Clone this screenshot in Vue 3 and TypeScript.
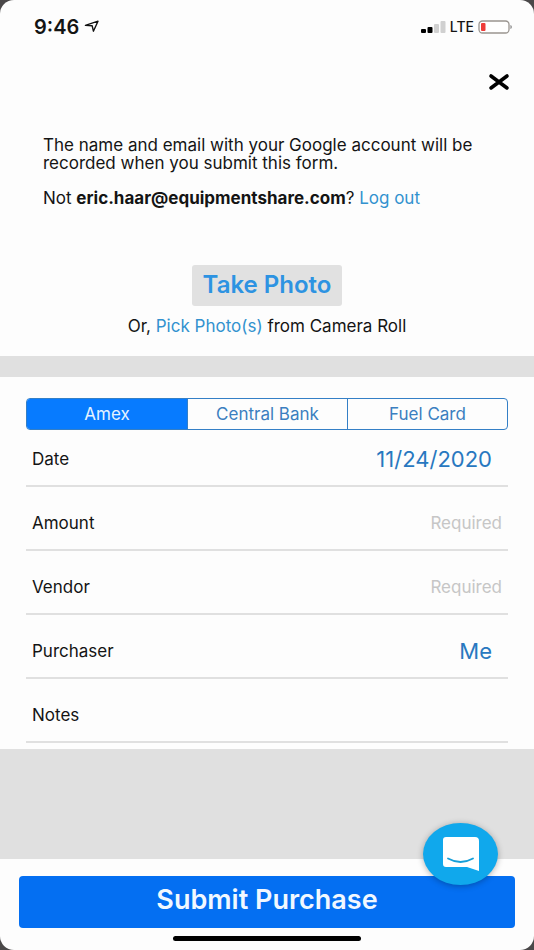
<script setup lang="ts">
import { ref } from 'vue'

const cards = ['Amex', 'Central Bank', 'Fuel Card']
const card = ref('Amex')
const date = ref('11/24/2020')
const amount = ref('')
const vendor = ref('')
const purchaser = ref('Me')
const notes = ref('')
</script>

<template>
  <div class="device">
    <div class="screen">
      <header class="status">
        <div class="clock">
          <span>9:46</span>
          <svg width="16" height="13" viewBox="0 0 16 13" fill="none" stroke="#111" stroke-width="1.4" stroke-linejoin="round">
            <path d="M1.4 5.4 14 1.2 9.4 11.2 8.2 5.8Z" />
          </svg>
        </div>
        <div class="signals">
          <svg width="25" height="14" viewBox="0 0 25 14">
            <rect x="0" y="9" width="5" height="4" rx="1" fill="#000" />
            <rect x="6.500" y="7" width="5" height="6" rx="1" fill="#000" />
            <rect x="13" y="4" width="5" height="9" rx="1" fill="#d0d0d0" />
            <rect x="19.500" y="1" width="5" height="12" rx="1" fill="#d0d0d0" />
          </svg>
          <span>LTE</span>
          <svg width="35" height="14" viewBox="0 0 35 14">
            <rect x="1" y="1" width="30" height="12" rx="3.500" fill="#fff" stroke="#9a9590" stroke-width="1.300" />
            <rect x="3" y="3" width="4.500" height="8" rx="1" fill="#ee3b38" />
            <path d="M32.500 5c1.600.3 1.600 3.700 0 4z" fill="#777" />
          </svg>
        </div>
      </header>

      <div class="toolbar">
        <button class="close" type="button" aria-label="Close">
          <svg width="22" height="18" viewBox="0 0 22 18" stroke="#000" stroke-width="3.600" stroke-linecap="round">
            <path d="M3 3 19 15M19 3 3 15" />
          </svg>
        </button>
      </div>

      <section class="account">
        <p>The name and email with your Google account will be recorded when you submit this form.</p>
        <p>Not <strong>eric.haar@equipmentshare.com</strong>? <a href="#">Log out</a></p>
      </section>

      <section class="photo">
        <button class="take" type="button">Take Photo</button>
        <p>Or, <a href="#">Pick Photo(s)</a> from Camera Roll</p>
      </section>

      <div class="band"></div>

      <form id="purchase" class="form" @submit.prevent>
        <div class="segments" role="radiogroup" aria-label="Card">
          <label v-for="name in cards" :key="name" class="segment" :class="{ active: card === name }">
            <input v-model="card" type="radio" name="card" :value="name" />
            <span>{{ name }}</span>
          </label>
        </div>
        <div class="rows">
          <div class="row">
            <label for="date">Date</label>
            <input id="date" v-model="date" class="value" type="text" />
          </div>
          <div class="row">
            <label for="amount">Amount</label>
            <input id="amount" v-model="amount" type="text" inputmode="decimal" placeholder="Required" />
          </div>
          <div class="row">
            <label for="vendor">Vendor</label>
            <input id="vendor" v-model="vendor" type="text" placeholder="Required" />
          </div>
          <div class="row">
            <label for="purchaser">Purchaser</label>
            <select id="purchaser" v-model="purchaser" class="value">
              <option>Me</option>
            </select>
          </div>
          <div class="row">
            <label for="notes">Notes</label>
            <input id="notes" v-model="notes" type="text" />
          </div>
        </div>
      </form>

      <div class="filler"></div>

      <footer class="footer">
        <button class="submit" type="submit" form="purchase">Submit Purchase</button>
        <div class="home"></div>
        <button class="chat" type="button" aria-label="Open chat">
          <svg width="38" height="36" viewBox="0 0 38 36">
            <path d="M4 1H33Q37 1 37 5V35L25 31H4Q1 31 1 28V4Q1 1 4 1Z" fill="#fff" />
            <path d="M6 22.500Q18.500 29.500 31 22.500" fill="none" stroke="#169fd8" stroke-width="1.800" stroke-linecap="round" />
          </svg>
        </button>
      </footer>
    </div>
  </div>
</template>

<style>
body {
  margin: 0;
  background: #4a4849;
}
</style>

<style scoped>
* {
  box-sizing: border-box;
}
.device {
  background: #4a4849;
  font-family: Inter, "Liberation Sans", sans-serif;
  font-size: 17px;
  line-height: 18px;
  color: #141414;
}
.screen {
  display: flex;
  flex-direction: column;
  min-height: 100vh;
  background: #fdfdfd;
  border-radius: 14px;
  overflow: hidden;
}
button,
input,
select {
  font: inherit;
  border: 0;
  margin: 0;
  padding: 0;
  background: none;
}
p {
  margin: 0;
}
a {
  color: #3292cf;
  text-decoration: none;
}
.status {
  display: flex;
  justify-content: space-between;
  align-items: center;
  height: 53px;
  padding: 0 21px 0 34px;
}
.clock,
.signals {
  display: flex;
  align-items: center;
}
.clock {
  gap: 5px;
  font-size: 20px;
  font-weight: 600;
}
.signals {
  gap: 4px;
  font-size: 14px;
  font-weight: 500;
}
.toolbar {
  display: flex;
  justify-content: flex-end;
  padding: 20px 24px 0;
}
.close {
  display: flex;
  height: 18px;
}
.account {
  display: flex;
  flex-direction: column;
  gap: 17px;
  padding: 45px 43px 0;
}
.photo {
  display: flex;
  flex-direction: column;
  align-items: center;
  gap: 11px;
  padding: 58px 20px 21px;
}
.take {
  height: 41px;
  padding: 0 11px 2px;
  border-radius: 3px;
  background: #e1e1e1;
  color: #2d93e2;
  font-size: 24px;
  font-weight: 600;
}
.band {
  height: 21px;
  background: #e0e0e0;
}
.form {
  padding: 21px 26px 6px;
}
.segments {
  display: grid;
  grid-template-columns: repeat(3, 1fr);
  height: 32px;
  border: 1px solid #347fc6;
  border-radius: 4px;
  overflow: hidden;
}
.segment {
  display: flex;
  align-items: center;
  justify-content: center;
  color: #3b7fc0;
}
.segment + .segment {
  border-left: 1px solid #347fc6;
}
.segment.active {
  background: #077bff;
  color: #e4f3ff;
}
.segment input {
  appearance: none;
  width: 0;
  height: 0;
}
.rows {
  margin-top: -7px;
}
.row {
  display: flex;
  align-items: center;
  justify-content: space-between;
  height: 64px;
  padding: 10px 6px 0;
  border-bottom: 2px solid #e0e0e0;
}
.row input,
.row select {
  flex: 1;
  min-width: 0;
  text-align: right;
  outline: 0;
}
.row input::placeholder {
  color: #c6c6c6;
  opacity: 1;
}
.row .value {
  appearance: none;
  padding-right: 10px;
  color: #2878c0;
  font-size: 22px;
  line-height: 24px;
  text-align-last: right;
}
.filler {
  flex: 1;
  min-height: 40px;
  background: #e0e0e0;
}
.footer {
  position: relative;
  display: flex;
  flex-direction: column;
  align-items: center;
  gap: 8px;
  padding: 17px 19px 9px;
}
.submit {
  width: 100%;
  height: 52px;
  padding-bottom: 4px;
  border-radius: 4px;
  background: #046ff2;
  color: #f1f8ff;
  font-size: 27px;
  font-weight: 600;
}
.home {
  width: 38%;
  height: 5px;
  border-radius: 3px;
  background: #000;
}
.chat {
  position: absolute;
  top: -36px;
  right: 36px;
  display: flex;
  align-items: center;
  justify-content: center;
  width: 75px;
  height: 62px;
  border-radius: 50%;
  background: #10a8ec;
  box-shadow: 0 1px 6px rgba(0, 0, 0, 0.3);
}
</style>
